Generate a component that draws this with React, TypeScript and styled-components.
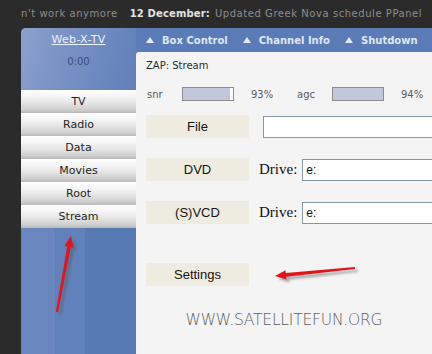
import React from "react";
import styled, { createGlobalStyle } from "styled-components";

const GlobalStyle = createGlobalStyle`
  html, body { margin: 0; padding: 0; background: #2b2b2b; overflow: hidden; }
  * { box-sizing: border-box; }
`;

const Page = styled.div`
  position: relative;
  width: 432px;
  height: 354px;
  overflow: hidden;
  background: #2b2b2b;
`;

const TopStrip = styled.div`
  height: 28px;
  padding-left: 21px;
  display: flex;
  align-items: center;
  white-space: nowrap;
  font-family: "DejaVu Sans", Verdana, sans-serif;
  font-size: 10px;
  color: #8e8e8e;
  padding-bottom: 2px;
`;

const NewsText = styled.span`
  letter-spacing: 0.55px;
`;

const NewsDate = styled.b`
  color: #e2e2e2;
  margin-left: 12px;
  margin-right: 5px;
  letter-spacing: 0.15px;
`;

const Frame = styled.div`
  margin-left: 21px;
  height: 326px;
  display: grid;
  grid-template-columns: 115px minmax(0, 1fr);
  grid-template-rows: 24px minmax(0, 1fr);
  border-top-left-radius: 5px;
  overflow: hidden;
  background: #5b7bb6;
`;

const Sidebar = styled.div`
  grid-column: 1;
  grid-row: 1 / span 2;
  display: flex;
  flex-direction: column;
  background: linear-gradient(
    90deg,
    #6a86be 0px,
    #6a86be 34px,
    #6081ba 34px,
    #6081ba 64px,
    #5678b3 64px
  );
`;

const SideHead = styled.div`
  height: 62px;
  display: flex;
  flex-direction: column;
  align-items: center;
  background: linear-gradient(105deg, #8ca1cd 0%, #7690c4 45%, #6080ba 100%);
`;

const Brand = styled.a`
  height: 24px;
  line-height: 24px;
  font-family: "DejaVu Sans", Verdana, sans-serif;
  font-size: 11px;
  color: #eef2fa;
  text-decoration: underline;
  letter-spacing: 0.3px;
`;

const Clock = styled.div`
  margin-top: 4px;
  font-family: "DejaVu Sans", Verdana, sans-serif;
  font-size: 10px;
  color: #3f4e72;
`;

const SideButton = styled.div`
  height: 23px;
  display: flex;
  align-items: center;
  justify-content: center;
  font-family: "DejaVu Sans", Verdana, sans-serif;
  font-size: 11px;
  color: #1e1e1e;
  background: linear-gradient(
    180deg,
    #ffffff 0%,
    #f6f6f6 25%,
    #e6e6e6 55%,
    #cfcfcf 85%,
    #b9b9b9 100%
  );
`;

const NavBar = styled.div`
  grid-column: 2;
  grid-row: 1;
  display: flex;
  align-items: center;
  padding-left: 10px;
  white-space: nowrap;
  overflow: hidden;
  background: #5b7bb6;
`;

const NavItem = styled.div`
  display: flex;
  align-items: center;
  gap: 8px;
  margin-right: 15px;
  font-family: "DejaVu Sans", Verdana, sans-serif;
  font-weight: bold;
  font-size: 10px;
  color: #dfe6f3;
`;

const Panel = styled.div`
  grid-column: 2;
  grid-row: 2;
  background: #f4f4f4;
  border-top-left-radius: 3px;
  padding-left: 10px;
  display: flex;
  flex-direction: column;
  overflow: hidden;
`;

const Zap = styled.div`
  margin-top: 7px;
  height: 14px;
  line-height: 14px;
  font-family: "DejaVu Sans", Verdana, sans-serif;
  font-size: 10px;
  color: #2c2c2c;
`;

const SignalRow = styled.div`
  margin-top: 14px;
  height: 14px;
  display: flex;
  align-items: center;
  font-family: "DejaVu Sans", Verdana, sans-serif;
  font-size: 10px;
  color: #5a5a5a;
`;

const SigLabel = styled.span`
  width: 36px;
  flex-shrink: 0;
  padding-left: 1px;
`;

const SigValue = styled.span<{ $w: number }>`
  width: ${(p) => p.$w}px;
  flex-shrink: 0;
  padding-left: 17px;
`;

const Meter = styled.div`
  width: 52px;
  height: 14px;
  flex-shrink: 0;
  border: 1px solid #8c8c8c;
  background: #ffffff;
  display: flex;
`;

const MeterFill = styled.div`
  height: 100%;
  background: #c3c7da;
`;

const FormRow = styled.div<{ $top: number }>`
  margin-top: ${(p) => p.$top}px;
  height: 23px;
  display: flex;
  align-items: center;
`;

const ActionButton = styled.div`
  width: 103px;
  height: 23px;
  flex-shrink: 0;
  display: flex;
  align-items: center;
  justify-content: center;
  background: #eeebe0;
  font-family: "Liberation Sans", Arial, sans-serif;
  font-size: 13px;
  color: #141414;
`;

const DriveLabel = styled.span`
  margin-left: 10px;
  margin-right: 5px;
  font-family: "Liberation Serif", "Times New Roman", serif;
  font-size: 15px;
  color: #111;
`;

const TextInput = styled.div<{ $gap: number }>`
  margin-left: ${(p) => p.$gap}px;
  width: 220px;
  flex-shrink: 0;
  height: 22px;
  border: 1px solid #8797a6;
  border-right: none;
  background: #ffffff;
  display: flex;
  align-items: center;
  padding-left: 3px;
  font-family: "Liberation Sans", Arial, sans-serif;
  font-size: 12px;
  color: #111;
`;

const Watermark = styled.div`
  margin-top: 25px;
  margin-left: -10px;
  text-align: center;
  font-family: "DejaVu Sans", sans-serif;
  font-weight: 200;
  font-size: 15.5px;
  color: #5e5e5e;
  letter-spacing: -0.2px;
`;

const ArrowLayer = styled.svg`
  position: absolute;
  left: 0;
  top: 0;
  pointer-events: none;
`;

function arrowPoints(tail: [number, number], tip: [number, number]): string {
  const dx = tip[0] - tail[0];
  const dy = tip[1] - tail[1];
  const len = Math.hypot(dx, dy);
  const ux = dx / len;
  const uy = dy / len;
  const nx = -uy;
  const ny = ux;
  const headLen = 11;
  const neck: [number, number] = [tip[0] - ux * headLen, tip[1] - uy * headLen];
  const p = (b: [number, number], w: number) =>
    `${(b[0] + nx * w).toFixed(1)},${(b[1] + ny * w).toFixed(1)}`;
  return [
    p(tail, 1.1),
    p(neck, 1.8),
    p(neck, 4.6),
    `${tip[0]},${tip[1]}`,
    p(neck, -4.6),
    p(neck, -1.8),
    p(tail, -1.1),
  ].join(" ");
}

function Arrow({ tail, tip }: { tail: [number, number]; tip: [number, number] }) {
  const pts = arrowPoints(tail, tip);
  return (
    <g>
      <polygon points={pts} fill="#555" opacity={0.45} transform="translate(3,3)" filter="url(#shadowBlur)" />
      <polygon points={pts} fill="#e3141a" />
    </g>
  );
}

function Triangle() {
  return (
    <svg width="8" height="6" viewBox="0 0 8 6">
      <polygon points="4,0 8,6 0,6" fill="#e4eaf5" />
    </svg>
  );
}

const menu = ["TV", "Radio", "Data", "Movies", "Root", "Stream"];
const navItems = ["Box Control", "Channel Info", "Shutdown", ""];

export default function App() {
  return (
    <>
      <GlobalStyle />
      <Page>
        <TopStrip>
          <NewsText>n't work anymore</NewsText>
          <NewsDate>12 December:</NewsDate>
          <NewsText>Updated Greek Nova schedule PPanel</NewsText>
        </TopStrip>
        <Frame>
          <Sidebar>
            <SideHead>
              <Brand>Web-X-TV</Brand>
              <Clock>0:00</Clock>
            </SideHead>
            {menu.map((m) => (
              <SideButton key={m}>{m}</SideButton>
            ))}
          </Sidebar>
          <NavBar>
            {navItems.map((n, i) => (
              <NavItem key={i}>
                <Triangle />
                {n && <span>{n}</span>}
              </NavItem>
            ))}
          </NavBar>
          <Panel>
            <Zap>ZAP: Stream</Zap>
            <SignalRow>
              <SigLabel>snr</SigLabel>
              <Meter>
                <MeterFill style={{ width: "93%" }} />
              </Meter>
              <SigValue $w={62}>93%</SigValue>
              <SigLabel>agc</SigLabel>
              <Meter>
                <MeterFill style={{ width: "100%" }} />
              </Meter>
              <SigValue $w={60}>94%</SigValue>
            </SignalRow>
            <FormRow $top={14}>
              <ActionButton>File</ActionButton>
              <TextInput $gap={14} />
            </FormRow>
            <FormRow $top={20}>
              <ActionButton>DVD</ActionButton>
              <DriveLabel>Drive:</DriveLabel>
              <TextInput $gap={0}>e:</TextInput>
            </FormRow>
            <FormRow $top={20}>
              <ActionButton>(S)VCD</ActionButton>
              <DriveLabel>Drive:</DriveLabel>
              <TextInput $gap={0}>e:</TextInput>
            </FormRow>
            <FormRow $top={39}>
              <ActionButton>Settings</ActionButton>
            </FormRow>
            <Watermark>WWW.SATELLITEFUN.ORG</Watermark>
          </Panel>
        </Frame>
        <ArrowLayer width="432" height="354" viewBox="0 0 432 354">
          <defs>
            <filter id="shadowBlur" x="-20%" y="-20%" width="140%" height="140%">
              <feGaussianBlur stdDeviation="1.2" />
            </filter>
          </defs>
          <Arrow tail={[57, 312]} tip={[71, 236]} />
          <Arrow tail={[355, 268]} tip={[275, 276]} />
        </ArrowLayer>
      </Page>
    </>
  );
}
